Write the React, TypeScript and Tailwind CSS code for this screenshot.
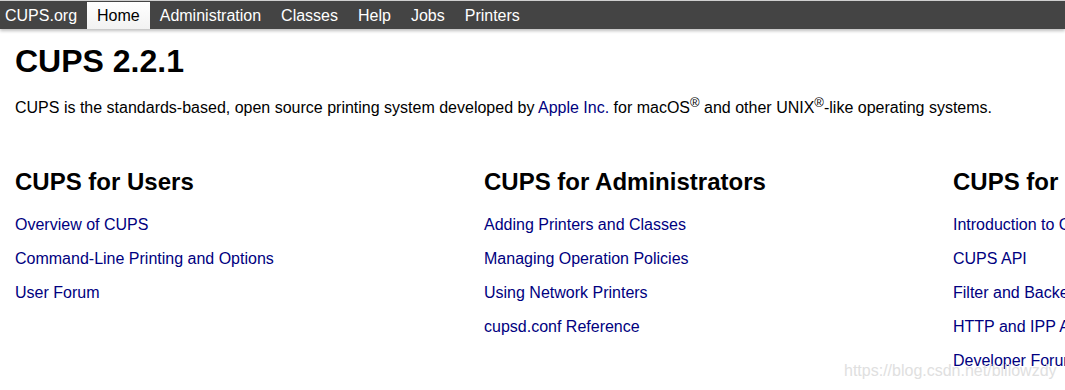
const navItems = ['Administration', 'Classes', 'Help', 'Jobs', 'Printers'];

const sections = [
  {
    title: 'CUPS for Users',
    links: ['Overview of CUPS', 'Command-Line Printing and Options', 'User Forum'],
  },
  {
    title: 'CUPS for Administrators',
    links: [
      'Adding Printers and Classes',
      'Managing Operation Policies',
      'Using Network Printers',
      'cupsd.conf Reference',
    ],
  },
  {
    title: 'CUPS for Developers',
    links: [
      'Introduction to CUPS Programming',
      'CUPS API',
      'Filter and Backend Programming',
      'HTTP and IPP APIs',
      'Developer Forum',
    ],
  },
];

export default function App() {
  return (
    <div className="relative w-[1065px] h-[390px] overflow-hidden bg-white font-['Liberation_Sans',Arial,sans-serif] text-black">
      {/* Header bar */}
      <div className="h-[29px] border-t border-[#cfcfcf] bg-[#444444] flex items-stretch text-[16px] leading-[18px] text-white shadow-[0_2px_3px_rgba(0,0,0,0.25)] relative z-10">
        <a className="flex items-center pt-[2px] pl-[5px] pr-[10px]">CUPS.org</a>
        <a className="flex items-center pt-[1px] px-[10px] mt-px bg-gradient-to-b from-white to-[#f2f2f2] text-black">Home</a>
        {navItems.map((item) => (
          <a key={item} className="flex items-center pt-[2px] px-[10px]">
            {item}
          </a>
        ))}
      </div>

      <div className="pl-[15px]">
        <h1 className="mt-[14px] text-[32px] leading-[36px] font-bold">CUPS 2.2.1</h1>
        <p className="mt-[20px] text-[16px] leading-[18px] whitespace-nowrap">
          CUPS is the standards-based, open source printing system developed by{' '}
          <a className="text-[#000080]">Apple Inc.</a> for macOS
          <sup className="text-[13px]">®</sup> and other UNIX
          <sup className="text-[13px]">®</sup>-like operating systems.
        </p>

        {/* Sections */}
        <div className="mt-[51px] grid grid-cols-[469px_469px_469px]">
          {sections.map((s) => (
            <div key={s.title}>
              <h2 className="text-[24px] leading-[28px] font-bold whitespace-nowrap">{s.title}</h2>
              <ul className="mt-[12px]">
                {s.links.map((l) => (
                  <li key={l} className="text-[16px] leading-[34px] text-[#000080] whitespace-nowrap">
                    <a>{l}</a>
                  </li>
                ))}
              </ul>
            </div>
          ))}
        </div>
      </div>

      {/* Watermark */}
      <div className="absolute left-[844px] top-[362px] text-[16px] leading-[18px] text-[#e0e0e0] whitespace-nowrap">
        https://blog.csdn.net/billowzdy
      </div>
    </div>
  );
}
